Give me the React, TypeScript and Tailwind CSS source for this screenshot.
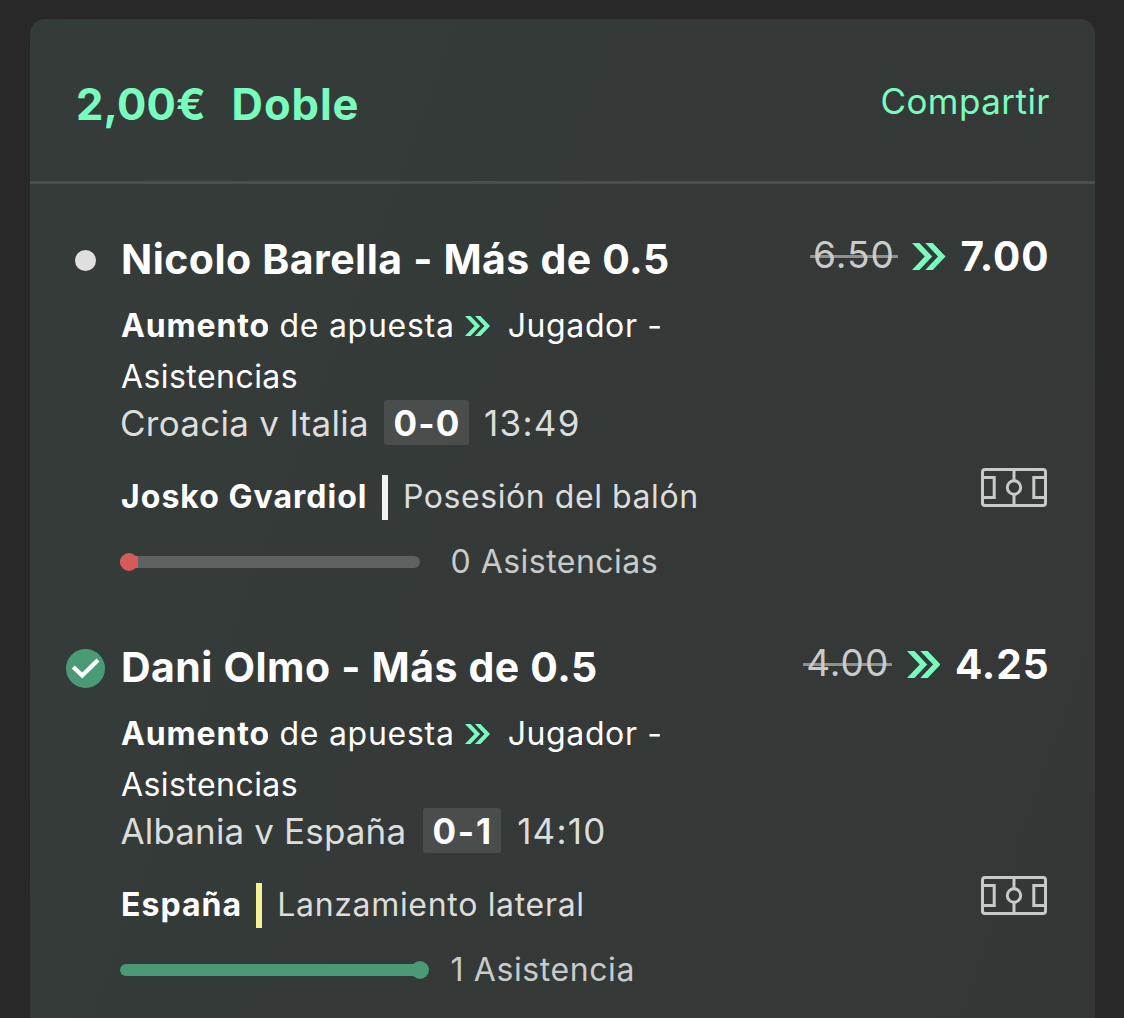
import type { ReactNode } from "react";

function Chevrons({ className }: { className: string }) {
  return (
    <svg viewBox="0 0 33.5 27" preserveAspectRatio="none" className={className} fill="#79fdbf">
      <path d="M0 0H7.4L20.2 13.5L7.4 27H0L12.8 13.5Z" />
      <path d="M13.3 0H20.7L33.5 13.5L20.7 27H13.3L26.1 13.5Z" />
    </svg>
  );
}

function Pitch() {
  return (
    <svg
      viewBox="0 0 66 39"
      className="-mt-[20px] ml-auto h-[39px] w-[66px] shrink-0"
      fill="none"
      stroke="#c8caca"
      strokeWidth="3"
    >
      <rect x="1.5" y="1.5" width="63" height="36" rx="2.5" />
      <path d="M33 2V13M33 26V37M2 9.5H13.2V29.5H2M64 9.5H52.8V29.5H64" />
      <circle cx="33" cy="19.5" r="6.7" />
    </svg>
  );
}

function OpenDot() {
  return <span className="mt-[3px] size-[21px] rounded-full bg-[#dfdfdf]" />;
}

function WonCheck() {
  return (
    <svg viewBox="0 0 39 39" className="mt-[3px] size-[39px]" fill="none">
      <circle cx="19.5" cy="19.5" r="19.5" fill="#4a9a76" />
      <path d="M7.3 18L16.2 26.6L32 11" stroke="#fff" strokeWidth="4.3" />
    </svg>
  );
}

type SelectionProps = {
  className: string;
  icon: ReactNode;
  title: string;
  oldOdds: string;
  odds: string;
  children: ReactNode;
};

function Selection({ className, icon, title, oldOdds, odds, children }: SelectionProps) {
  return (
    <section className={className}>
      <div className="flex h-[64px] items-center pr-[45.5px] pl-[36px]">
        <div className="flex w-[39px] shrink-0 justify-center">{icon}</div>
        <h2 className="ml-[16px] text-[41px] font-bold tracking-[0.45px] text-white [word-spacing:0.5px]">
          {title}
        </h2>
        <div className="-mt-[6px] ml-auto flex items-center">
          <span className="relative -mt-[4px] px-[3px] text-[37px] tracking-[1.06px] text-[#c9cbca]">
            {oldOdds}
            <span className="absolute inset-x-0 top-1/2 mt-px h-[3px] bg-[#c9cbca]/60" />
          </span>
          <Chevrons className="ml-[14.5px] h-[27px] w-[33.5px]" />
          <span className="mt-[2px] ml-[14.5px] text-[40.5px] font-bold tracking-[0.9px] text-white">{odds}</span>
        </div>
      </div>
      <div className="mt-[9px] pl-[91px]">
        <div className="flex h-[51px] items-center text-[32px] text-white">
          <b className="font-bold tracking-[0.85px]">Aumento</b>
          <span className="ml-[9.5px] tracking-[0.73px]">de apuesta</span>
          <Chevrons className="ml-[10px] h-[20px] w-[25px]" />
          <span className="ml-[18px] tracking-[0.61px]">Jugador -</span>
        </div>
        <div className="flex h-[51px] items-center text-[32px] tracking-[0.44px] text-white">Asistencias</div>
      </div>
      {children}
    </section>
  );
}

export default function App() {
  return (
    <div className="h-[1018px] overflow-hidden bg-[#282828] px-[30px] pt-[19px] pr-[29px] font-['Inter',sans-serif] leading-none whitespace-nowrap">
      <main className="h-[1020px] rounded-t-[15px] bg-linear-[110deg] from-[#343c39] to-[#353736]">
        <header className="flex h-[165px] items-center border-b-[3px] border-[#4a504e] pr-[45px] pl-[46px] text-[#79fdbf]">
          <h1 className="mt-[9px] flex gap-[25.5px] text-[43.5px] font-bold">
            <span className="tracking-[0.2px]">2,00€</span>
            <span className="tracking-[0.92px]">Doble</span>
          </h1>
          <a className="mt-[3px] ml-auto text-[35px] tracking-[0.46px]">Compartir</a>
        </header>

        <Selection
          className="mt-[43px]"
          icon={<OpenDot />}
          title="Nicolo Barella - Más de 0.5"
          oldOdds="6.50"
          odds="7.00"
        >
          <div className="-mt-[2px] flex h-[45px] items-center pl-[90px] text-[35px] text-[#dcdddc]">
            <span className="mt-px tracking-[0.28px]">Croacia v Italia</span>
            <b className="ml-[15.1px] flex h-[45px] w-[85px] items-center justify-center rounded-[3px] bg-[#494e4c] pt-px pl-px font-bold tracking-[1.2px] text-white">
              0-0
            </b>
            <span className="mt-px ml-[15px] tracking-[1.3px]">13:49</span>
          </div>
          <div className="mt-[30px] flex h-[45px] items-center pr-[48px] pl-[91px] text-[32px]">
            <b className="-mt-px font-bold tracking-[1.03px] text-white">Josko Gvardiol</b>
            <span className="ml-[14.2px] h-[45px] w-[6px] bg-[#f2f2f4]" />
            <span className="-mt-px ml-[15.2px] tracking-[0.57px] text-[#dcdddc]">Posesión del balón</span>
            <Pitch />
          </div>
          <div className="mt-[22px] flex h-[40px] items-center pl-[90px]">
            <div className="relative h-[12px] w-[300px] rounded-full bg-[#5e6361]">
              <div className="h-[12px] w-[18px] rounded-l-full bg-[#d55b5b]" />
              <div className="absolute -top-[3px] left-0 size-[18px] rounded-full bg-[#d55b5b]" />
            </div>
            <span className="ml-[30.5px] text-[32px] tracking-[0.48px] text-[#c9cbca]">0 Asistencias</span>
          </div>
        </Selection>

        <Selection
          className="mt-[53px]"
          icon={<WonCheck />}
          title="Dani Olmo - Más de 0.5"
          oldOdds="4.00"
          odds="4.25"
        >
          <div className="-mt-[2px] flex h-[45px] items-center pl-[90.5px] text-[35px] text-[#dcdddc]">
            <span className="mt-px tracking-[0.14px]">Albania v España</span>
            <b className="ml-[16.9px] flex h-[45px] w-[78px] items-center justify-center rounded-[3px] bg-[#494e4c] pt-px pl-px font-bold tracking-[1.7px] text-white">
              0-1
            </b>
            <span className="mt-px ml-[16px] tracking-[1.21px]">14:10</span>
          </div>
          <div className="mt-[30px] flex h-[45px] items-center pr-[48px] pl-[91px] text-[32px]">
            <b className="-mt-px font-bold tracking-[1.05px] text-white">España</b>
            <span className="ml-[13.8px] h-[45px] w-[6px] bg-[#f4f296]" />
            <span className="-mt-px ml-[15.2px] tracking-[0.68px] text-[#dcdddc]">Lanzamiento lateral</span>
            <Pitch />
          </div>
          <div className="mt-[22px] flex h-[40px] items-center pl-[90px]">
            <div className="relative h-[12px] w-[300px] rounded-full bg-[#4a9a76]">
              <div className="absolute -top-[3px] -right-[9px] size-[18px] rounded-full bg-[#4a9a76]" />
            </div>
            <span className="ml-[30.5px] text-[32px] tracking-[0.6px] text-[#c9cbca]">1 Asistencia</span>
          </div>
        </Selection>
      </main>
    </div>
  );
}
